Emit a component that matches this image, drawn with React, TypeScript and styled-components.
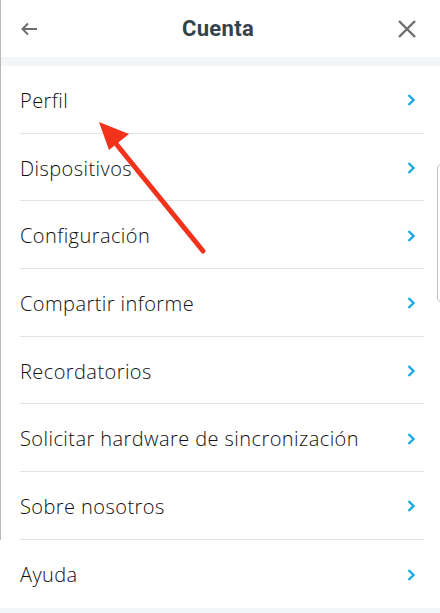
import React from "react";
import styled, { createGlobalStyle } from "styled-components";

const items: string[] = [
  "Perfil",
  "Dispositivos",
  "Configuración",
  "Compartir informe",
  "Recordatorios",
  "Solicitar hardware de sincronización",
  "Sobre nosotros",
  "Ayuda",
];

const GlobalStyle = createGlobalStyle`
  html, body {
    margin: 0;
    padding: 0;
    background: #f4f5f7;
  }
`;

const App: React.FC = () => {
  return (
    <Page>
      <GlobalStyle />
      <Header>
        <IconButton aria-label="Volver">
          <svg width="20" height="20" viewBox="0 0 20 20">
            <path d="M18 10H3.5M9 4.5L3.5 10L9 15.5" fill="none" stroke="#6d6d6d" strokeWidth="2" />
          </svg>
        </IconButton>
        <Title>Cuenta</Title>
        <IconButton aria-label="Cerrar">
          <svg width="20" height="20" viewBox="0 0 20 20">
            <path d="M2 2L18 18M18 2L2 18" fill="none" stroke="#6d6d6d" strokeWidth="2.4" />
          </svg>
        </IconButton>
      </Header>
      <List>
        {items.map((label, i) => (
          <Row key={label} $last={i === items.length - 1}>
            <Label>{label}</Label>
            <svg width="10" height="14" viewBox="0 0 10 14">
              <path d="M2.5 2L7.5 7L2.5 12" fill="none" stroke="#1ea9e1" strokeWidth="2.4" />
            </svg>
          </Row>
        ))}
      </List>
      <EdgeLine />
      <ScrollHandle />
      <Pointer width="120" height="145" viewBox="0 0 120 145">
        <path d="M108 132L22 26" stroke="#f2321b" strokeWidth="5" strokeLinecap="round" />
        <path d="M4 3L34 15L14 31Z" fill="#f2321b" />
      </Pointer>
    </Page>
  );
};

export default App;

const Page = styled.div`
  position: relative;
  width: 440px;
  height: 613px;
  overflow: hidden;
  background: #f4f5f7;
  font-family: "Open Sans", "Noto Sans", sans-serif;
`;

const Header = styled.header`
  height: 57px;
  background: #ffffff;
  display: flex;
  align-items: center;
  justify-content: space-between;
  padding: 0 23px 0 19px;
  box-sizing: border-box;
  margin-bottom: 9px;
`;

const IconButton = styled.button`
  border: none;
  background: none;
  padding: 0;
  width: 20px;
  height: 20px;
  display: flex;
  align-items: center;
  justify-content: center;
  cursor: pointer;
`;

const Title = styled.h1`
  margin: 0;
  font-family: Roboto, "Noto Sans", sans-serif;
  font-weight: 700;
  font-size: 22px;
  color: #36434b;
  letter-spacing: 0.3px;
`;

const List = styled.ul`
  margin: 0;
  padding: 0 16px 0 20px;
  list-style: none;
  background: #ffffff;
`;

const Row = styled.li<{ $last: boolean }>`
  height: 67.7px;
  box-sizing: border-box;
  display: flex;
  align-items: center;
  justify-content: space-between;
  border-bottom: ${(p) => (p.$last ? "none" : "1px solid #e3e4e6")};
  padding-top: 2px;
  padding-right: 8px;
`;

const Label = styled.span`
  font-size: 20px;
  font-weight: 300;
  color: #111111;
  letter-spacing: 0.43px;
`;

const EdgeLine = styled.div`
  position: absolute;
  left: 0;
  top: 0;
  width: 1px;
  height: 540px;
  background: #b9b9b9;
`;

const ScrollHandle = styled.div`
  position: absolute;
  left: 437px;
  top: 164px;
  width: 8px;
  height: 136px;
  border: 1px solid #c4c4c4;
  border-radius: 4px;
  background: #ffffff;
`;

const Pointer = styled.svg`
  position: absolute;
  left: 95px;
  top: 119px;
`;
